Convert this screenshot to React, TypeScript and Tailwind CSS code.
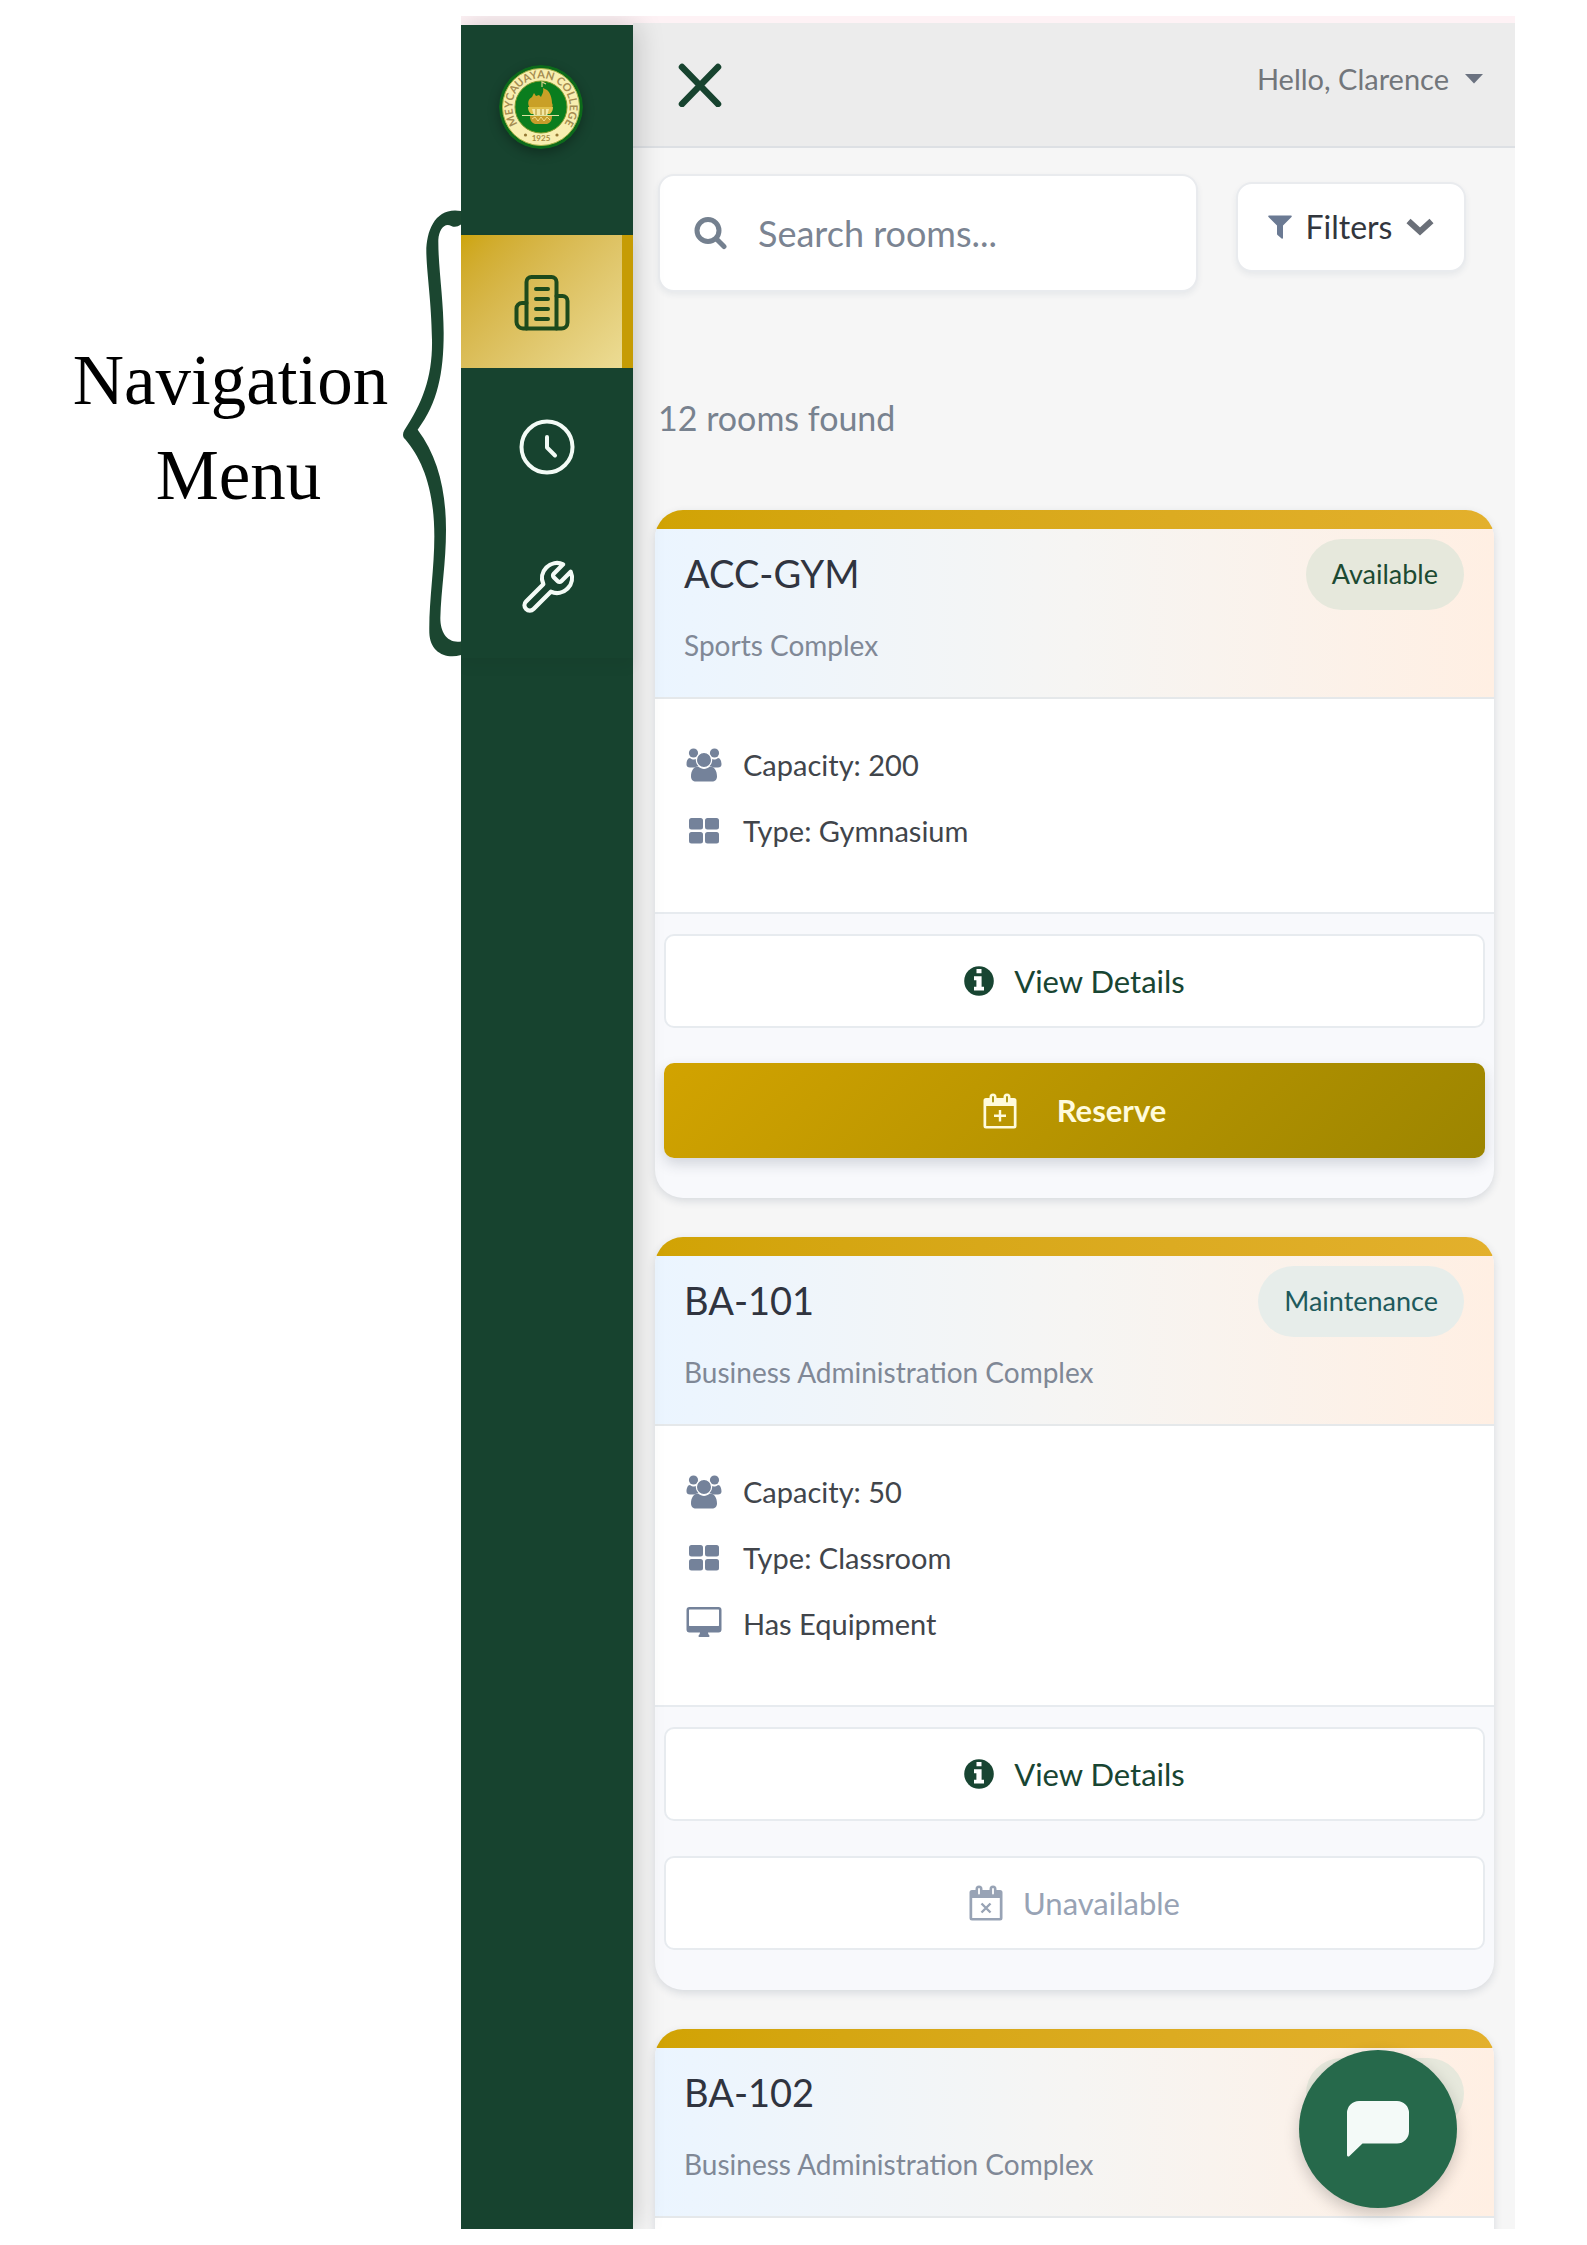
import React from "react";

type Status = "Available" | "Maintenance";

type Room = {
  name: string;
  building: string;
  status: Status;
  capacity?: number;
  type?: string;
  equipment?: boolean;
  partial?: boolean;
};

const rooms: Room[] = [
  { name: "ACC-GYM", building: "Sports Complex", status: "Available", capacity: 200, type: "Gymnasium" },
  {
    name: "BA-101",
    building: "Business Administration Complex",
    status: "Maintenance",
    capacity: 50,
    type: "Classroom",
    equipment: true,
  },
  { name: "BA-102", building: "Business Administration Complex", status: "Available", partial: true },
];

function CollegeSeal() {
  return (
    <svg viewBox="0 0 84 84" className="size-[84px] rounded-full shadow-[0_4px_12px_rgba(0,0,0,0.3)]" role="img" aria-label="College seal">
      <defs>
        <path id="seal-ring" d="M26.700 66.200 A28.700 28.700 0 1 1 57.300 66.200" />
      </defs>
      <circle cx="42" cy="42" r="42" fill="#0c6a1a" />
      <circle cx="42" cy="42" r="38.500" fill="#f8eeb0" stroke="#a9b44a" strokeWidth="1" />
      <circle cx="42" cy="42" r="26" fill="#0a7d1e" stroke="#7d9a2c" strokeWidth="1" />
      <text fontSize="11" fontWeight="700" fill="#a58c50" fontFamily="Lato, sans-serif">
        <textPath href="#seal-ring" startOffset="50%" textAnchor="middle">
          MEYCAUAYAN COLLEGE
        </textPath>
      </text>
      <text x="42" y="76" fontSize="8" fontWeight="700" fill="#a58c45" textAnchor="middle" fontFamily="Lato, sans-serif">
        1925
      </text>
      <circle cx="26.500" cy="70" r="1.600" fill="#957a35" />
      <circle cx="58" cy="70" r="1.600" fill="#957a35" />
      <path d="M31 43c-3-4-2-9 2-11l2-4 2 3 3-1 2 2c1-3 3-5 2-9l4 2c3 2 5 8 5 13 1 2 1 4-1 6z" fill="#c9a027" />
      <path d="M43 22v-5l4 2" stroke="#d8cf8a" strokeWidth="1.200" fill="none" />
      <path d="M29 42h25c0 3-1 5-3 7H32c-2-2-3-4-3-7z" fill="#e0c04a" />
      <path d="M33 44h17l-2 7H35z" fill="#f3e7a5" />
      <path d="M37 44v8M42 44v8M46 44v8" stroke="#b08d25" strokeWidth="1" />
      <path d="M23 50.500h37" stroke="#dfe3a0" strokeWidth="1" />
      <path d="M31 51h22c0 5-2 7-5 8H36c-3-1-5-3-5-8z" fill="#c69d2b" />
      <path d="M33 54l3-2 3 4 3-4 3 4 3-4 3 3" stroke="#f0dc8b" strokeWidth="1" fill="none" />
    </svg>
  );
}

function BuildingIcon() {
  return (
    <svg viewBox="0 0 56 56" className="h-14 w-14" fill="none" stroke="currentColor" strokeWidth="4" strokeLinecap="round" strokeLinejoin="round" aria-hidden="true">
      <path d="M12.500 53.500V7a5 5 0 0 1 5-5h20a5 5 0 0 1 5 5v46.500" />
      <path d="M12.500 28H8a5.500 5.500 0 0 0-5.500 5.500V47A6.500 6.500 0 0 0 9 53.500h38.500a6 6 0 0 0 6-6V26a5 5 0 0 0-5-5h-6" />
      <path d="M22 14h12M22 24h12M22 34h12M22 44h12" />
    </svg>
  );
}

function ClockIcon() {
  return (
    <svg viewBox="0 0 56 56" className="h-14 w-14" fill="none" stroke="currentColor" strokeWidth="4" strokeLinecap="round" strokeLinejoin="round" aria-hidden="true">
      <circle cx="28" cy="28" r="25.500" />
      <path d="M28 18v10.500l8 8" />
    </svg>
  );
}

function WrenchIcon() {
  return (
    <svg viewBox="0 0 24 24" className="size-[60px]" fill="none" stroke="currentColor" strokeWidth="1.700" strokeLinecap="round" strokeLinejoin="round" aria-hidden="true">
      <path d="M14.700 6.300a1 1 0 0 0 0 1.400l1.600 1.600a1 1 0 0 0 1.400 0l3.770-3.770a6 6 0 0 1-7.940 7.940l-6.910 6.910a2.120 2.120 0 0 1-3-3l6.910-6.910a6 6 0 0 1 7.940-7.940l-3.760 3.760z" />
    </svg>
  );
}

function SearchIcon() {
  return (
    <svg viewBox="0 0 34 34" className="size-[34px]" fill="none" stroke="currentColor" strokeLinecap="round" aria-hidden="true">
      <circle cx="14" cy="14.500" r="11" strokeWidth="5" />
      <path d="M22.500 23l7.500 7.500" strokeWidth="5" />
    </svg>
  );
}

function FunnelIcon() {
  return (
    <svg viewBox="0 0 24 24" className="size-6" fill="currentColor" aria-hidden="true">
      <path d="M1 .5h22c.8 0 1.100.9.500 1.500L15 10.500V23c0 .8-.8 1.100-1.400.6L9.500 20c-.3-.3-.5-.6-.5-1v-8.500L.5 2C-.1 1.400.2.500 1 .5z" />
    </svg>
  );
}

function ChevronIcon() {
  return (
    <svg viewBox="0 0 28 18" className="h-[18px] w-7" fill="none" stroke="currentColor" strokeWidth="6" aria-hidden="true">
      <path d="M2.500 3L14 13.500 25.500 3" />
    </svg>
  );
}

function PeopleIcon() {
  return (
    <svg viewBox="0 0 36 34" className="h-[34px] w-9" fill="currentColor" aria-hidden="true">
      <circle cx="7.500" cy="5" r="4.600" />
      <circle cx="28.500" cy="5" r="4.600" />
      <path d="M4 10c2.500 2 5 2 7 .5-.5 3 .2 5.500 2 7.500-2 .2-3.500 1-4.500 1.500H4c-2.200 0-3.500-1-3.500-3C.5 13.500 1.500 10 4 10zM32 10c-2.500 2-5 2-7 .5.500 3-.2 5.500-2 7.500 2 .2 3.500 1 4.500 1.500H32c2.200 0 3.500-1 3.500-3 0-3-1-6.500-3.500-6.500z" />
      <circle cx="18" cy="12" r="7.600" stroke="#fff" strokeWidth="1.200" />
      <path d="M12 18.500c4 3.200 8 3.200 12 0 4.500 0 7 4.500 7 10 0 3-2 5-5 5H10c-3 0-5-2-5-5 0-5.500 2.500-10 7-10z" />
    </svg>
  );
}

function GridIcon() {
  return (
    <svg viewBox="0 0 36 34" className="h-[34px] w-9" fill="currentColor" aria-hidden="true">
      <rect x="3" y="4" width="14" height="11.500" rx="2.500" />
      <rect x="19" y="4" width="14" height="11.500" rx="2.500" />
      <rect x="3" y="18" width="14" height="11.500" rx="2.500" />
      <rect x="19" y="18" width="14" height="11.500" rx="2.500" />
    </svg>
  );
}

function DesktopIcon() {
  return (
    <svg viewBox="0 0 36 34" className="h-[34px] w-9" fill="currentColor" aria-hidden="true">
      <path fillRule="evenodd" d="M3.500 0h29A3 3 0 0 1 35.500 3v19.500a3 3 0 0 1-3 3H22c0 2 1.500 2.500 1.500 3.500 0 .6-.4 1-1 1h-9c-.6 0-1-.4-1-1 0-1 1.500-1.500 1.500-3.500H3.500a3 3 0 0 1-3-3V3a3 3 0 0 1 3-3zm-.5 3.200V18.500c0 .3.200.5.500.5h29c.3 0 .5-.2.500-.5V3.200c0-.4-.2-.7-.5-.7h-29c-.3 0-.5.3-.5.700z" />
    </svg>
  );
}

function InfoIcon() {
  return (
    <svg viewBox="0 0 30 30" className="size-[30px]" aria-hidden="true">
      <circle cx="15" cy="15" r="14.800" fill="currentColor" />
      <path d="M12.500 3h5v4.200h-5zM10 10.300h7.600v10.500H20v3.800H10v-3.800h2.400v-6.500H10z" fill="#fff" />
    </svg>
  );
}

function CalendarIcon({ mark }: { mark: "plus" | "cross" }) {
  return (
    <svg viewBox="0 0 34 36" className="h-9 w-[34px]" aria-hidden="true">
      <path fillRule="evenodd" fill="currentColor" d="M3 5h3.500V4a3.500 3.500 0 0 1 7 0v1h7V4a3.500 3.500 0 0 1 7 0v1H31a2.500 2.500 0 0 1 2.500 2.500V33a2.500 2.500 0 0 1-2.500 2.500H3A2.500 2.500 0 0 1 .5 33V7.500A2.500 2.500 0 0 1 3 5zm.2 8v20h27.600V13z" />
      <path d="M10 4v4.500M24 4v4.500" stroke={mark === "plus" ? "#a89000" : "#fff"} strokeWidth="1.800" strokeLinecap="round" />
      {mark === "plus" ? (
        <path d="M17 17v11.500M11 22.700h12" stroke="currentColor" strokeWidth="2.400" />
      ) : (
        <path d="M12.500 18.500l9 9M21.500 18.500l-9 9" stroke="currentColor" strokeWidth="2.400" />
      )}
    </svg>
  );
}

function Annotation() {
  return (
    <div className="flex items-start justify-end pt-48">
      <p className="flex flex-1 flex-col pt-[125px] pl-[60px] text-center font-['Liberation_Serif',serif] text-[71px] leading-[95px] text-black">
        <span>Navigation</span>
        <span className="pl-4">Menu</span>
      </p>
      <svg viewBox="1085 55 180 1350" className="h-[450px] w-[60px] shrink-0" aria-hidden="true">
        <path
          fill="#1b4630"
          d="M1266 64C1190 50 1160 120 1161 190C1163 260 1176 330 1178 450C1180 560 1150 640 1095 722C1089 732 1090 742 1097 748C1150 810 1185 900 1185 1040C1185 1140 1168 1240 1170 1330C1172 1385 1215 1410 1266 1396V1355C1225 1362 1203 1330 1203 1285C1205 1200 1220 1120 1220 1020C1220 900 1195 800 1135 720C1195 640 1213 550 1213 430C1213 330 1196 230 1197 150C1199 120 1215 98 1236 109Q1250 116 1266 104Z"
        />
      </svg>
    </div>
  );
}

function Sidebar() {
  return (
    <aside className="relative z-10 mt-[9px] w-[172px] shrink-0 bg-[#17432f] shadow-[4px_0_26px_rgba(0,0,0,0.18)]">
      <div className="flex justify-center pt-10 pr-3">
        <CollegeSeal />
      </div>
      <nav aria-label="Main" className="mt-[86px] flex flex-col shadow-[0_8px_14px_rgba(0,0,0,0.05)]">
        <a
          href="#rooms"
          aria-label="Rooms"
          aria-current="page"
          className="mb-2 flex h-[133px] items-center justify-center border-r-11 border-[#c69c05] bg-linear-135 from-[#cda506] to-[#ecdc94] pt-0.5 text-[#1d4a1c]"
        >
          <BuildingIcon />
        </a>
        <a href="#history" aria-label="History" className="flex h-[141px] items-center justify-center text-[#f3fbf6]">
          <ClockIcon />
        </a>
        <a href="#maintenance" aria-label="Maintenance" className="flex h-[141px] items-center justify-center text-[#f3fbf6]">
          <WrenchIcon />
        </a>
      </nav>
    </aside>
  );
}

function Feature({ icon, children }: { icon: React.ReactNode; children: React.ReactNode }) {
  return (
    <li className="flex h-[66px] items-center gap-[21px]">
      {icon}
      <span>{children}</span>
    </li>
  );
}

function StatusBadge({ status }: { status: Status }) {
  return (
    <span
      className={
        status === "Available"
          ? "mt-2.5 flex h-[71px] items-center rounded-full bg-[#e6e8dc] px-[26px] text-[27px] text-[#1c4a32]"
          : "mt-2.5 flex h-[71px] items-center rounded-full bg-[#e7edea] px-[26px] text-[27px] text-[#205a5c]"
      }
    >
      {status}
    </span>
  );
}

function RoomCard({ room }: { room: Room }) {
  const outlined =
    "flex h-[94px] w-full items-center justify-center rounded-[10px] border-2 border-[#e7ebef] bg-white text-[31px]";
  return (
    <article className="overflow-hidden rounded-[28px] bg-[#f8f9fc] shadow-[0_3px_8px_rgba(30,50,80,0.14)]">
      <div className="h-[19px] bg-linear-to-r from-[#d1a304] to-[#e3b02c]" />
      <header className="flex h-[170px] items-start justify-between border-b-2 border-[#e5e8ea] bg-linear-to-r from-[#ebf5ff] via-[#f6f5f3] to-[#ffefe3] pr-[30px] pl-[29px]">
        <div>
          <h2 className="mt-[22px] text-[38px] leading-[44px] text-[#30343f]">{room.name}</h2>
          <p className="mt-8 text-[28px] leading-9 text-[#808896]">{room.building}</p>
        </div>
        <StatusBadge status={room.status} />
      </header>
      {room.partial ? (
        <div className="h-20 bg-white" />
      ) : (
        <>
          <ul className="border-b-2 border-[#e7ebef] bg-white pt-[33px] pr-8 pb-12 pl-[31px] text-[29px] text-[#41454b] [&_svg]:text-[#74829a]">
            <Feature icon={<PeopleIcon />}>Capacity: {room.capacity}</Feature>
            <Feature icon={<GridIcon />}>Type: {room.type}</Feature>
            {room.equipment && <Feature icon={<DesktopIcon />}>Has Equipment</Feature>}
          </ul>
          <div className="flex flex-col gap-[35px] px-[9px] pt-5 pb-10">
            <button type="button" className={`${outlined} gap-5 text-[#184532]`}>
              <InfoIcon />
              View Details
            </button>
            {room.status === "Available" ? (
              <button
                type="button"
                className="flex h-[95px] w-full items-center justify-center gap-10 rounded-[10px] bg-linear-135 from-[#d2a300] to-[#9c8500] text-[31px] font-bold text-[#fffbdc] shadow-[0_6px_14px_rgba(40,50,70,0.18)]"
              >
                <CalendarIcon mark="plus" />
                Reserve
              </button>
            ) : (
              <button type="button" disabled className={`${outlined} gap-5 text-[#98a3b5]`}>
                <CalendarIcon mark="cross" />
                Unavailable
              </button>
            )}
          </div>
        </>
      )}
    </article>
  );
}

function TopBar() {
  return (
    <header className="flex h-[125px] items-start justify-between border-b-2 border-[#dde0e4] bg-[#ececec] pr-8 pl-[45px]">
      <button type="button" aria-label="Close menu" className="mt-10 text-[#17432f]">
        <svg viewBox="0 0 44 44" className="size-11" fill="none" stroke="currentColor" strokeWidth="6.500" strokeLinecap="round" aria-hidden="true">
          <path d="M4 4l36 37M40 4L4 41" />
        </svg>
      </button>
      <button type="button" className="mt-9 flex items-center gap-4 text-[29px] leading-10 text-[#72767b]">
        Hello, Clarence
        <svg viewBox="0 0 18 10" className="h-2.5 w-[18px]" fill="#6b7280" aria-hidden="true">
          <path d="M0 0h18L9 9.500z" />
        </svg>
      </button>
    </header>
  );
}

export default function App() {
  return (
    <div className="grid h-screen min-h-[900px] grid-cols-[461fr_1054fr_72fr] bg-white py-4 font-[Lato,sans-serif]">
      <Annotation />
      <div className="relative flex min-h-0 overflow-hidden bg-[#fef2f5]">
        <Sidebar />
        <div className="mt-[7px] flex min-w-0 flex-1 flex-col overflow-hidden bg-[#f6f6f6]">
          <TopBar />
          <main className="min-h-0 flex-1 overflow-hidden pt-[26px] pr-[21px] pl-[22px]">
            <div className="flex items-start gap-[38px] pr-7 pl-[3px]">
              <label className="flex h-[118px] min-w-0 flex-1 items-center gap-[30px] rounded-2xl border-2 border-[#e9ebee] bg-white pr-6 pl-[34px] text-[#74808f] shadow-[0_3px_6px_rgba(30,50,80,0.07)]">
                <SearchIcon />
                <input
                  type="search"
                  aria-label="Search rooms"
                  placeholder="Search rooms..."
                  className="min-w-0 flex-1 bg-transparent text-[36px] outline-none placeholder:text-[#7b8492]"
                />
              </label>
              <button
                type="button"
                className="mt-2 flex h-[90px] w-[230px] items-center justify-center gap-3.5 rounded-2xl border-2 border-[#e9ebee] bg-white text-[32px] text-[#32363d] shadow-[0_3px_6px_rgba(30,50,80,0.07)]"
              >
                <span className="text-[#6b7a93]">
                  <FunnelIcon />
                </span>
                Filters
                <span className="text-[#6b7079]">
                  <ChevronIcon />
                </span>
              </button>
            </div>
            <p className="mt-[106px] pl-[3px] text-[34px] leading-10 text-[#78828f]">12 rooms found</p>
            <div className="mt-[72px] flex flex-col gap-[39px]">
              {rooms.map((room) => (
                <RoomCard key={room.name} room={room} />
              ))}
            </div>
          </main>
        </div>
        <button
          type="button"
          aria-label="Open chat"
          className="absolute right-[58px] bottom-[21px] flex size-[158px] items-center justify-center rounded-full bg-[#26694b] shadow-[0_6px_16px_rgba(0,0,0,0.2)]"
        >
          <svg viewBox="0 0 62 56" className="h-14 w-[62px]" aria-hidden="true">
            <path d="M12 0h38a12 12 0 0 1 12 12v18.500a12 12 0 0 1-12 12H15.500L2.500 55C1.500 56 0 55.500 0 54V12A12 12 0 0 1 12 0z" fill="#f4faf8" />
          </svg>
        </button>
      </div>
    </div>
  );
}
